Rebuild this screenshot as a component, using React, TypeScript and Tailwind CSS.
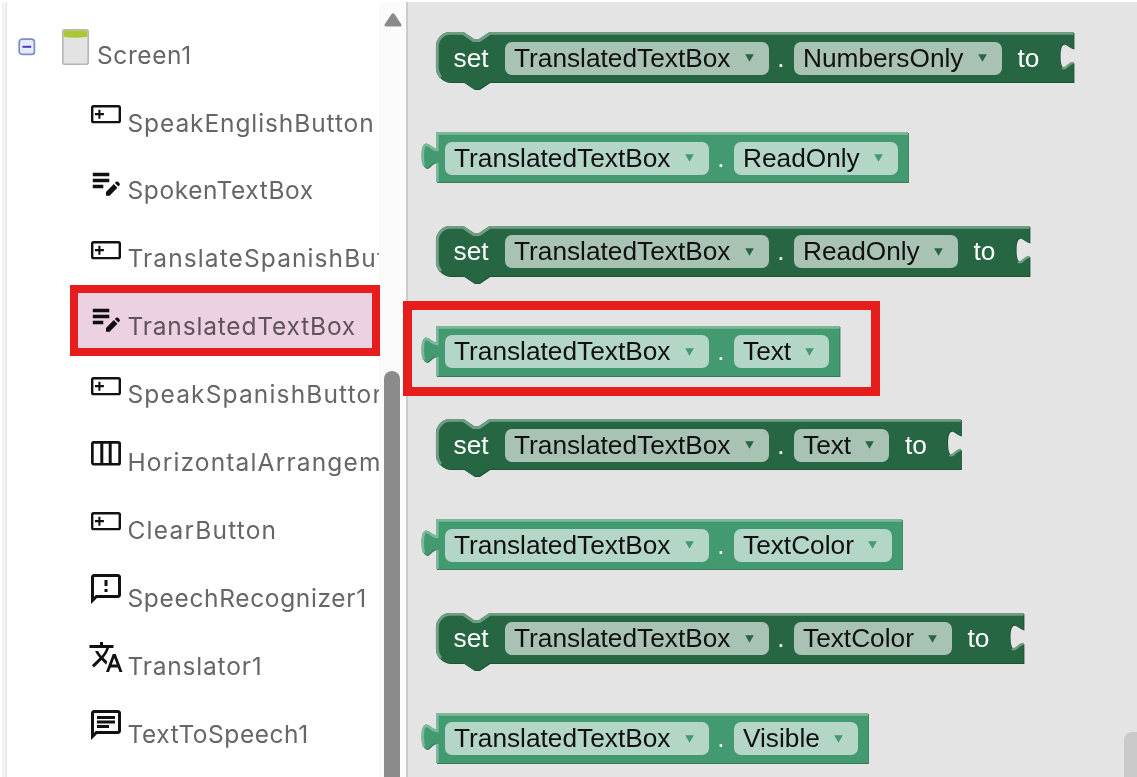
import type { ReactNode } from 'react';
import { MdOutlineChat, MdOutlineFeedback, MdTranslate } from 'react-icons/md';

type IconKind = 'button' | 'textbox' | 'columns' | 'speech' | 'translate' | 'chat';

const components: { name: string; icon: IconKind; tracking: string }[] = [
  { name: 'SpeakEnglishButton', icon: 'button', tracking: 'tracking-[0.9px]' },
  { name: 'SpokenTextBox', icon: 'textbox', tracking: 'tracking-[0.6px]' },
  { name: 'TranslateSpanishBut', icon: 'button', tracking: 'tracking-[1.1px]' },
  { name: 'TranslatedTextBox', icon: 'textbox', tracking: 'tracking-[0.82px]' },
  { name: 'SpeakSpanishButton', icon: 'button', tracking: 'tracking-[1.15px]' },
  { name: 'HorizontalArrangem', icon: 'columns', tracking: 'tracking-[1.15px]' },
  { name: 'ClearButton', icon: 'button', tracking: 'tracking-[1.2px]' },
  { name: 'SpeechRecognizer1', icon: 'speech', tracking: 'tracking-[0.65px]' },
  { name: 'Translator1', icon: 'translate', tracking: 'tracking-[0.8px]' },
  { name: 'TextToSpeech1', icon: 'chat', tracking: 'tracking-[0.55px]' },
];

const blocks: { kind: 'set' | 'get'; prop: string; width: number }[] = [
  { kind: 'set', prop: 'NumbersOnly', width: 208 },
  { kind: 'get', prop: 'ReadOnly', width: 164 },
  { kind: 'set', prop: 'ReadOnly', width: 164 },
  { kind: 'get', prop: 'Text', width: 95.5 },
  { kind: 'set', prop: 'Text', width: 95.5 },
  { kind: 'get', prop: 'TextColor', width: 158 },
  { kind: 'set', prop: 'TextColor', width: 158 },
  { kind: 'get', prop: 'Visible', width: 124 },
];

function ComponentIcon({ kind }: { kind: IconKind }) {
  const cls = 'h-9 w-9 text-[#111]';
  if (kind === 'textbox')
    return (
      <svg viewBox="0 0 24 24" className={cls} fill="currentColor">
        <path d="M3.2 5.9h11v2.2h-11zM3.2 9.9h11v2.2h-11zM3.2 13.9h7v2.2h-7z" />
        <path d="M17.2 13.4l2.4 2.4-5.2 5.3H12v-2.4zM17.9 12.7l.8-.8q.7-.6 1.4 0l.9.9q.6.7 0 1.4l-.7.8z" />
      </svg>
    );
  if (kind === 'speech') return <MdOutlineFeedback className={cls} />;
  if (kind === 'translate') return <MdTranslate className={cls} />;
  if (kind === 'chat') return <MdOutlineChat className={cls} />;
  if (kind === 'columns')
    return (
      <svg viewBox="0 0 24 24" className={cls} fill="none" stroke="currentColor" strokeWidth="1.8">
        <rect x="2.9" y="4.9" width="18.2" height="14.6" rx="1" />
        <path d="M9.2 5v14.4M14.8 5v14.4" strokeWidth="2" />
      </svg>
    );
  return (
    <svg viewBox="0 0 24 24" className={cls} fill="none" stroke="currentColor" strokeWidth="1.6">
      <rect x="2.8" y="6.8" width="18.4" height="10.6" rx="0.9" />
      <path d="M7.6 9.2v5.9M4.6 12.1h6" strokeWidth="1.4" />
    </svg>
  );
}

function Arrow({ color }: { color: string }) {
  return (
    <svg viewBox="0 0 9 8" className="h-[8px] w-[9px]">
      <path d="M0.2 0.2h8.6L4.5 7.8z" fill={color} />
    </svg>
  );
}

function Field({ width, color, children }: { width: number; color: string; children: ReactNode }) {
  return (
    <div
      className="flex h-[33px] shrink-0 items-center justify-between rounded-[7px] bg-white/60 pr-[15px] pl-[9.5px] text-[#111]"
      style={{ width }}
    >
      <span>{children}</span>
      <Arrow color={color} />
    </div>
  );
}

function SetShape({ w }: { w: number }) {
  const body = `M0,14.2 A14.2,14.2 0 0 1 14.2,0 H27.5 l10.5,7.1 h5 l10.5,-7.1 H${w} V16.5 c-3,-.5 -6,-3.5 -9,-4.8 c-3.4,-.6 -4.8,4 -4.8,11.3 s1,11.8 4.3,12.6 c3.2,0 5.5,-5 9.5,-5.3 V50 H53.5 l-10.5,7.1 h-5 l-10.5,-7.1 H14.2 A14.2,14.2 0 0 1 0,35.8 z`;
  return (
    <svg className="absolute top-0 left-0 overflow-visible" width={w + 1} height="58">
      <path d={body} fill="#1e5236" transform="translate(0.9 1)" />
      <path d={body} fill="#266643" />
      <path
        d={`M4.8,45.2 A14,14 0 0 1 1.3,35.8 V14.2 A13,13 0 0 1 14.2,1.4 H27 l10.5,7.1 h6 l10.5,-7.1 H${w}`}
        fill="none"
        stroke="#6f9e84"
        strokeWidth="2.9"
      />
      <path d={`M${w - 11.5},36 q2.6,1.2 6,-2.4 q3,-2.8 5.2,-2.6`} fill="none" stroke="#6f9e84" strokeWidth="2.4" />
    </svg>
  );
}

function GetShape({ w }: { w: number }) {
  const body = `M0,0 H${w} V50 H0 V30.3 c-4,.3 -6.3,5.3 -9.5,5.8 c-3.6,-.6 -5,-6 -5,-12.8 s1.4,-12 5,-11.8 c3,.6 6,4.4 9.5,5 z`;
  return (
    <svg className="absolute top-0 left-0 overflow-visible" width={w + 1} height="52">
      <path d={body} fill="#367b5a" transform="translate(0.9 1)" />
      <path d={body} fill="#439970" />
      <path
        d={`M1.3,50 V31 M-12,33.5 q-1.4,-3.5 -1.2,-10.2 q0,-10 3.4,-10.5 q3,.6 6,3.4 q2.5,1.7 5.1,1.7 V1.4 H${w}`}
        fill="none"
        stroke="#7cb99b"
        strokeWidth="2.6"
      />
    </svg>
  );
}

function Block({ kind, prop, width }: { kind: 'set' | 'get'; prop: string; width: number }) {
  if (kind === 'set') {
    const total = width + 429.5;
    return (
      <div className="h-[100px]">
        <div className="relative flex h-[52px] items-center" style={{ width: total }}>
          <SetShape w={total} />
          <div className="relative flex items-center text-white">
            <span className="ml-[18px] w-[51px]">set</span>
            <Field width={264} color="#266643">TranslatedTextBox</Field>
            <span className="w-[25px] text-center">.</span>
            <Field width={width} color="#266643">{prop}</Field>
            <span className="ml-4">to</span>
          </div>
        </div>
      </div>
    );
  }
  const total = width + 308;
  return (
    <div className="h-[93.5px]">
      <div className="relative flex h-[52px] items-center" style={{ width: total }}>
        <GetShape w={total} />
        <div className="relative flex items-center pl-[9px] text-white">
          <Field width={264} color="#439970">TranslatedTextBox</Field>
          <span className="w-[25px] text-center">.</span>
          <Field width={width} color="#439970">{prop}</Field>
        </div>
      </div>
    </div>
  );
}

export default function App() {
  return (
    <div className="relative flex h-[777px] w-[1137px] overflow-hidden bg-white pt-[2px]">
      <div className="ml-[2px] w-[5px] shrink-0 border-r border-[#e2e2e2] bg-[#f3f3f3]" />
      <aside className="w-[372px] shrink-0 overflow-hidden bg-white font-['Inter',sans-serif] text-[24.5px] whitespace-nowrap text-[#666]">
        <div className="flex h-[79.5px] items-start">
          <svg viewBox="0 0 18 18" className="mt-[36px] ml-[11px] h-[18px] w-[18px]">
            <rect x="1.2" y="1.2" width="15.2" height="15.2" rx="3" fill="#e6e9f6" stroke="#7c8cc8" strokeWidth="1.7" />
            <path d="M4.5 8.8h8.7" stroke="#4438d0" strokeWidth="2" />
          </svg>
          <svg viewBox="0 0 27 36" className="mt-[26.5px] ml-[26px] h-9 w-[27px]">
            <rect x="0.8" y="0.8" width="25.4" height="34.4" rx="2" fill="#e3e3e3" stroke="#b5b5b5" strokeWidth="1.6" />
            <path d="M1.6 1.6h23.8v6.2q-12 2-23.8 0z" fill="#a9c837" />
          </svg>
          <span className="mt-[35px] ml-[8px] leading-[36px] tracking-[0.6px]">Screen1</span>
        </div>
        {components.map((c) => (
          <div key={c.name} className="flex h-[67.95px] items-start">
            <span className="mt-[14.3px] ml-[80.5px] shrink-0">
              <ComponentIcon kind={c.icon} />
            </span>
            <span className={`mt-[23px] ml-[4px] leading-[36px] ${c.tracking}`}>{c.name}</span>
          </div>
        ))}
      </aside>
      <div className="flex w-[27px] shrink-0 flex-col items-center bg-[#fbfbfb]">
        <svg viewBox="0 0 18 14" className="mt-[11px] h-[14px] w-[18px]">
          <path d="M9 0.3q1 0 1.8 1.1l6.3 9.6q1.2 2.5-1 2.6H1.9q-2.2-.1-1-2.6L7.2 1.4Q8 .3 9 .3z" fill="#8b8b8b" />
        </svg>
        <div className="mt-[344px] mr-[1px] w-[16px] flex-1 rounded-t-full bg-[#8b8b8b]" />
      </div>
      <main className="flex flex-1 justify-between border-l-2 border-[#cbcbcb] bg-[#e4e4e4] font-['Liberation_Sans',sans-serif] text-[26.25px] leading-[33px]">
        <div className="pt-[30px] pl-[27.5px]">
          {blocks.map((b) => (
            <Block key={b.kind + b.prop} {...b} />
          ))}
        </div>
        <div className="mt-[730px] w-[13px] rounded-tl-[8px] bg-[#cacaca]" />
      </main>
      <div className="absolute top-[285px] left-[70px] h-[70.5px] w-[310px] border-[8.5px] border-[#e71c1c] bg-[#ecd1e3] mix-blend-multiply" />
      <div className="absolute top-[300.5px] left-[403px] h-[95px] w-[476.5px] border-[9px] border-[#e71c1c]" />
    </div>
  );
}
